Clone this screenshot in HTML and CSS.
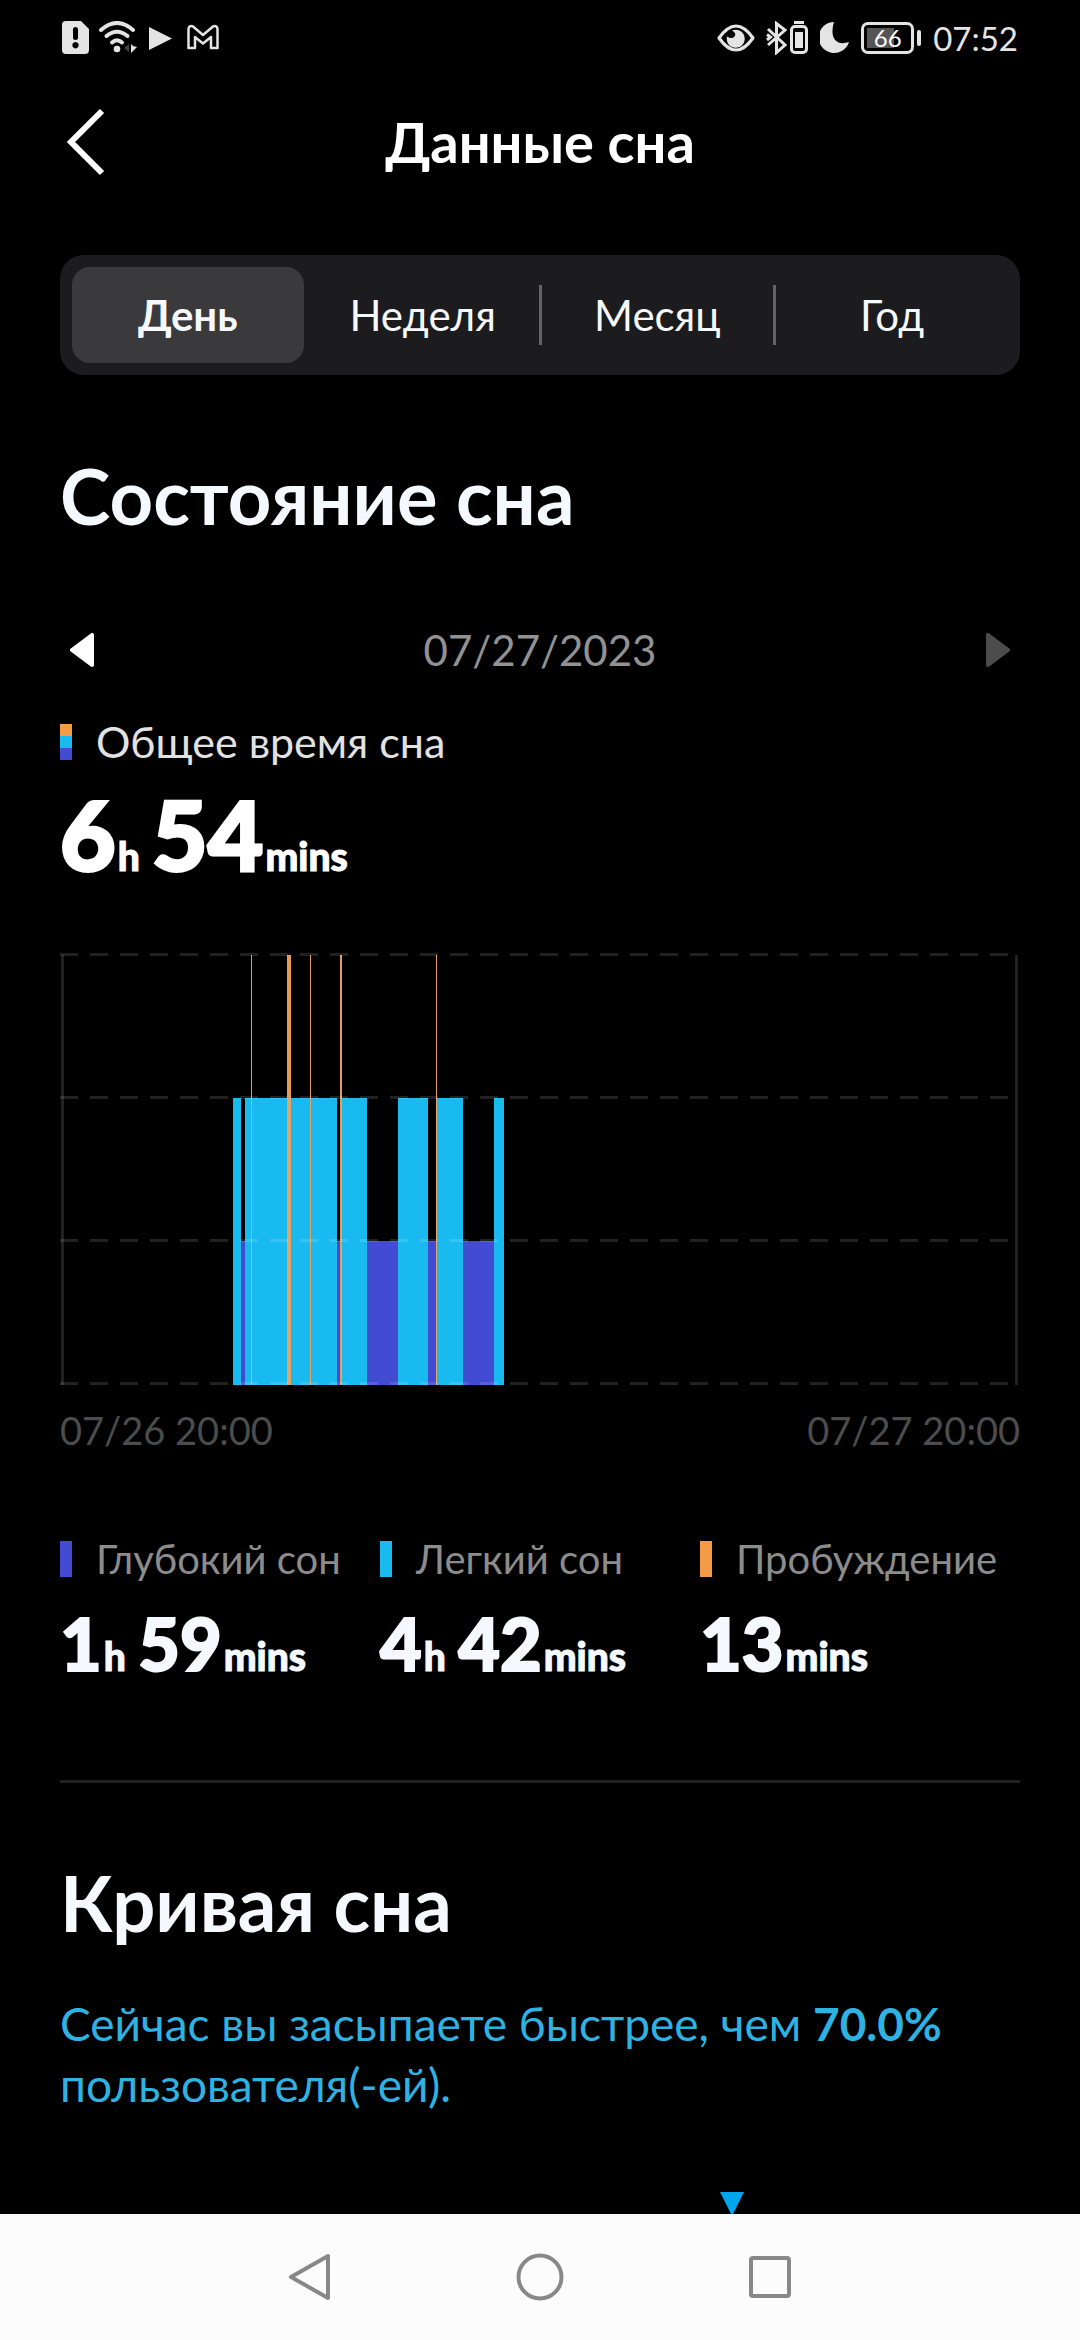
FILE: index.html
```
<!DOCTYPE html>
<html lang="ru">
  <head>
    <meta charset="UTF-8">
    <meta name="viewport" content="width=device-width, initial-scale=1">
    <title>Данные сна</title>
    <link rel="stylesheet" href="styles.css">
  </head>
  <body>
    <div class="status-bar">
      <div class="status-icons">
        <svg class="icon-sim" width="28" height="34" viewBox="0 0 28 34">
          <path fill="#e4e4e4" fill-rule="evenodd" d="M4 0h15l8 8v21a4 4 0 0 1-4 4H4a4 4 0 0 1-4-4V4a4 4 0 0 1 4-4zM13.500 6a2.500 2.500 0 0 0-2.500 2.500v8a2.500 2.500 0 0 0 5 0v-8A2.500 2.500 0 0 0 13.500 6zM13.500 21a3.200 3.200 0 1 0 .01 0z"/>
        </svg>
        <svg class="icon-wifi" width="38" height="34" viewBox="0 0 38 34">
          <g fill="none" stroke="#e4e4e4" stroke-width="4" stroke-linecap="round">
            <path d="M2 9Q18 -5 34 9"/>
            <path d="M7.500 15Q18 6.500 28.500 15"/>
            <path d="M13 21.500Q18 17 23 21.500"/>
          </g>
          <circle cx="18" cy="28" r="3.300" fill="#e4e4e4"/>
          <path d="M30 23v8l-5-4z" fill="#444"/>
          <path d="M32 23l2 2 4 1-6 6z" fill="#e4e4e4"/>
        </svg>
        <svg class="icon-play" width="24" height="34" viewBox="0 0 24 34">
          <path d="M0 6l23 11.500L0 29z" fill="#e4e4e4"/>
        </svg>
        <svg class="icon-mail" width="32" height="34" viewBox="0 0 32 34">
          <path d="M1.500 25.500V8Q2 4 6 5.500L16 14 26 5.500Q30 4 30.500 8V27H24V16L16 22.500 8 16V27H1.500z" fill="none" stroke="#e4e4e4" stroke-width="2.500" stroke-linejoin="round"/>
        </svg>
      </div>
      <div class="status-icons">
        <svg width="38" height="34" viewBox="0 0 38 34">
          <path d="M2 17Q19-7 36 17Q19 41 2 17z" fill="none" stroke="#e4e4e4" stroke-width="3.200" stroke-linejoin="round"/>
          <path d="M15 9.500a9 9 0 1 1-5 6q5 3 7.500 0t-2.500-6z" fill="#e4e4e4"/>
        </svg>
        <svg class="icon-bluetooth" width="43" height="34" viewBox="0 0 43 34">
          <path d="M2 8l17 16-8.500 7.500v-29L19 9 2 24M1 13.500l3.500 2.500L1 19" fill="none" stroke="#e4e4e4" stroke-width="3"/>
          <rect x="25.500" y="5.500" width="15" height="26" rx="3.500" fill="none" stroke="#e4e4e4" stroke-width="3"/>
          <path d="M28 0h10v3H28zM29 11h8v16h-8z" fill="#e4e4e4"/>
        </svg>
        <svg class="icon-moon" width="29" height="34" viewBox="0 0 29 34">
          <path d="M14 1A15.500 15.500 0 1 0 29 21Q16 25 13 15Q11.500 8 14 1z" fill="#e4e4e4"/>
        </svg>
        <div class="battery"><span class="battery-level">66</span></div>
        <span class="clock">07:52</span>
      </div>
    </div>

    <header class="header">
      <button class="back" type="button" aria-label="Назад">
        <svg width="40" height="68" viewBox="0 0 40 68">
          <path d="M35 3L4 34l31 31" fill="none" stroke="#fff" stroke-width="6"/>
        </svg>
      </button>
      <h1 class="title">Данные сна</h1>
    </header>

    <main class="content">
      <div class="tabs">
        <button class="tab active" type="button">День</button>
        <span class="tab-line hidden"></span>
        <button class="tab" type="button">Неделя</button>
        <span class="tab-line"></span>
        <button class="tab" type="button">Месяц</button>
        <span class="tab-line"></span>
        <button class="tab" type="button">Год</button>
      </div>

      <section class="state">
        <h2 class="section-title">Состояние сна</h2>
        <div class="date-row">
          <button class="arrow" type="button" aria-label="Предыдущий день">
            <svg width="24" height="34" viewBox="0 0 24 34">
              <path d="M22 2v30L2 17z" fill="#fff" stroke="#fff" stroke-width="4" stroke-linejoin="round"/>
            </svg>
          </button>
          <span class="date">07/27/2023</span>
          <button class="arrow" type="button" aria-label="Следующий день" disabled>
            <svg width="24" height="34" viewBox="0 0 24 34">
              <path d="M2 2v30l20-15z" fill="#4c4c4c" stroke="#4c4c4c" stroke-width="4" stroke-linejoin="round"/>
            </svg>
          </button>
        </div>

        <div class="legend total">
          <span class="mark mark-all"></span>
          <span class="legend-text">Общее время сна</span>
        </div>
        <p class="value value-big">6<small class="hours">h </small>54<small>mins</small></p>

        <svg class="chart" viewBox="0 0 960 433" shape-rendering="crispEdges">
          <!-- глубокий сон -->
          <g fill="#434bd3">
            <rect x="181" y="289" width="4" height="144"/>
            <rect x="277" y="289" width="3" height="144"/>
            <rect x="307" y="289" width="31" height="144"/>
            <rect x="368" y="289" width="8" height="144"/>
            <rect x="403" y="289" width="31" height="144"/>
          </g>
          <!-- легкий сон -->
          <g fill="#19baef">
            <rect x="173" y="146" width="8" height="287"/>
            <rect x="185" y="146" width="92" height="287"/>
            <rect x="281" y="146" width="26" height="287"/>
            <rect x="338" y="146" width="30" height="287"/>
            <rect x="376" y="146" width="27" height="287"/>
            <rect x="434" y="146" width="10" height="287"/>
          </g>
          <!-- пробуждение -->
          <g fill="#f2a25c" fill-opacity=".95">
            <rect x="191" y="3" width="1" height="430"/>
            <rect x="227" y="3" width="4" height="430"/>
            <rect x="250" y="3" width="1" height="430"/>
            <rect x="280" y="3" width="2" height="430"/>
            <rect x="376" y="3" width="1" height="430"/>
          </g>
          <g stroke="#fff" stroke-opacity=".13" stroke-width="3">
            <path d="M0 2.500h948M0 145.500h948M0 288.500h948M0 431.500h948" stroke-dasharray="18 12"/>
            <path d="M2.500 3v430M956.500 3v430"/>
          </g>
        </svg>
        <div class="axis">
          <span>07/26 20:00</span>
          <span>07/27 20:00</span>
        </div>

        <div class="phases">
          <div class="phase">
            <div class="legend">
              <span class="mark mark-deep"></span>
              <span class="legend-text">Глубокий сон</span>
            </div>
            <p class="value">1<small class="hours">h </small>59<small>mins</small></p>
          </div>
          <div class="phase">
            <div class="legend">
              <span class="mark mark-light"></span>
              <span class="legend-text">Легкий сон</span>
            </div>
            <p class="value">4<small class="hours">h </small>42<small>mins</small></p>
          </div>
          <div class="phase">
            <div class="legend">
              <span class="mark mark-awake"></span>
              <span class="legend-text">Пробуждение</span>
            </div>
            <p class="value">13<small>mins</small></p>
          </div>
        </div>
      </section>

      <section class="curve">
        <h2 class="section-title">Кривая сна</h2>
        <p class="curve-text">Сейчас вы засыпаете быстрее, чем <b>70.0%</b> пользователя(-ей).</p>
        <div class="curve-scale">
          <!-- маркер на 70% шкалы -->
          <svg class="curve-marker" style="margin-left: 70%" width="24" height="24" viewBox="0 0 24 24">
            <path d="M0 0h24L12 24z" fill="#00a6ec"/>
          </svg>
        </div>
      </section>
    </main>

    <nav class="nav-bar">
      <button class="nav-button" type="button" aria-label="Назад">
        <svg width="48" height="48" viewBox="0 0 48 48">
          <path d="M42 3v42L5 24z" fill="none" stroke="#888" stroke-width="4" stroke-linejoin="round"/>
        </svg>
      </button>
      <button class="nav-button" type="button" aria-label="Домой">
        <svg width="48" height="48" viewBox="0 0 48 48">
          <circle cx="24" cy="24" r="21.500" fill="none" stroke="#888" stroke-width="4"/>
        </svg>
      </button>
      <button class="nav-button" type="button" aria-label="Недавние">
        <svg width="48" height="48" viewBox="0 0 48 48">
          <rect x="5" y="5" width="38" height="38" rx="2" fill="none" stroke="#888" stroke-width="4"/>
        </svg>
      </button>
    </nav>
  </body>
</html>
```

FILE: styles.css
```
* {
  box-sizing: border-box;
}
body {
  display: flex;
  flex-direction: column;
  height: 100vh;
  margin: 0;
  background-color: #000;
  color: #f5f8fc;
  font-family: Lato, "Open Sans", sans-serif;
}
button {
  padding: 0;
  border: none;
  background: none;
  color: inherit;
  font: inherit;
  cursor: pointer;
}
svg {
  display: block;
}
h1, h2, p {
  margin: 0;
}

/* статус-бар */
.status-bar {
  display: flex;
  flex-shrink: 0;
  justify-content: space-between;
  height: 76px;
  padding: 0 62px;
  color: #e4e4e4;
}
.status-icons {
  display: flex;
  align-items: center;
}
.icon-wifi {
  margin-left: 9px;
}
.icon-play {
  margin-left: 12px;
}
.icon-mail {
  margin-left: 14px;
}
.icon-bluetooth {
  margin-left: 11px;
}
.icon-moon {
  margin-left: 11px;
}
.battery {
  position: relative;
  width: 53px;
  height: 32px;
  margin-left: 12px;
  padding: 3px;
  border: 3px solid #e4e4e4;
  border-radius: 7px;
}
.battery::after {
  content: "";
  position: absolute;
  top: 5px;
  right: -10px;
  width: 4px;
  height: 16px;
  border-radius: 2px;
  background-color: #e4e4e4;
}
.battery-level {
  display: block;
  height: 20px;
  background: linear-gradient(to right, #555 66%, transparent 66%);
  color: #fff;
  font-size: 24px;
  line-height: 20px;
  text-align: center;
}
.clock {
  margin-left: 19px;
  font-size: 33px;
}

/* шапка */
.header {
  display: grid;
  grid-template-columns: 40px 1fr 40px;
  flex-shrink: 0;
  align-items: center;
  height: 131px;
  padding: 0 67px;
}
.title {
  color: #fff;
  font-size: 56px;
  font-weight: 700;
  text-align: center;
}

.content {
  flex: 1;
  padding: 48px 60px 0;
  overflow: hidden;
}

/* вкладки */
.tabs {
  display: flex;
  align-items: center;
  height: 120px;
  padding: 12px;
  border-radius: 24px;
  background-color: #1c1c1e;
}
.tab {
  flex: 1;
  height: 96px;
  border-radius: 18px;
  font-size: 42px;
}
.tab.active {
  background-color: #3a3a3c;
  font-weight: 700;
}
.tab-line {
  width: 3px;
  height: 60px;
  background-color: #636366;
}
.tab-line.hidden {
  visibility: hidden;
}

.section-title {
  font-size: 76px;
  font-weight: 700;
  line-height: 88px;
}
.state {
  padding: 77px 0 95px;
  border-bottom: 3px solid #1f1f1f;
}
.date-row {
  display: flex;
  align-items: center;
  justify-content: space-between;
  height: 60px;
  margin-top: 80px;
  padding: 0 10px;
}
.date {
  color: #929292;
  font-size: 42px;
}
.legend {
  display: flex;
  align-items: center;
  gap: 24px;
}
.legend-text {
  color: #8c8c8c;
  font-size: 40px;
  line-height: 48px;
  white-space: nowrap;
}
.mark {
  width: 12px;
  height: 36px;
}
.mark-all {
  background: linear-gradient(#f59a45 12px, #19baef 12px 24px, #434bd3 24px);
}
.mark-deep {
  background-color: #434bd3;
}
.mark-light {
  background-color: #19baef;
}
.mark-awake {
  background-color: #f59a45;
}
.total {
  margin-top: 38px;
}
.total .legend-text {
  color: #e2e2e2;
  font-size: 43px;
}
.value {
  margin-top: 18px;
  font-size: 72px;
  font-weight: 900;
  line-height: 84px;
  -webkit-text-stroke: 2px currentColor;
}
.value small {
  padding-left: 2px;
  font-size: 39px;
  line-height: 1;
  -webkit-text-stroke-width: 1px;
}
.value .hours {
  padding-right: 3px;
}
.value-big {
  margin-top: 12px;
  color: #fff;
  font-size: 96px;
  line-height: 112px;
  -webkit-text-stroke-width: 3px;
}

.chart {
  width: 100%;
  margin-top: 62px;
}
.axis {
  display: flex;
  justify-content: space-between;
  margin-top: 21px;
  color: #4c4c4c;
  font-size: 38px;
  line-height: 48px;
}
.phases {
  display: grid;
  grid-template-columns: repeat(3, 1fr);
  margin-top: 81px;
}

/* кривая сна */
.curve {
  padding-top: 76px;
}
.curve-text {
  margin-top: 46px;
  color: #2eb2e2;
  font-size: 46px;
  line-height: 61px;
}
.curve-scale {
  margin-top: 77px;
}
.curve-marker {
  transform: translateX(-50%);
}

/* системная навигация */
.nav-bar {
  display: flex;
  flex-shrink: 0;
  align-items: center;
  justify-content: center;
  gap: 182px;
  height: 126px;
  background-color: #fcfcfc;
}
```
